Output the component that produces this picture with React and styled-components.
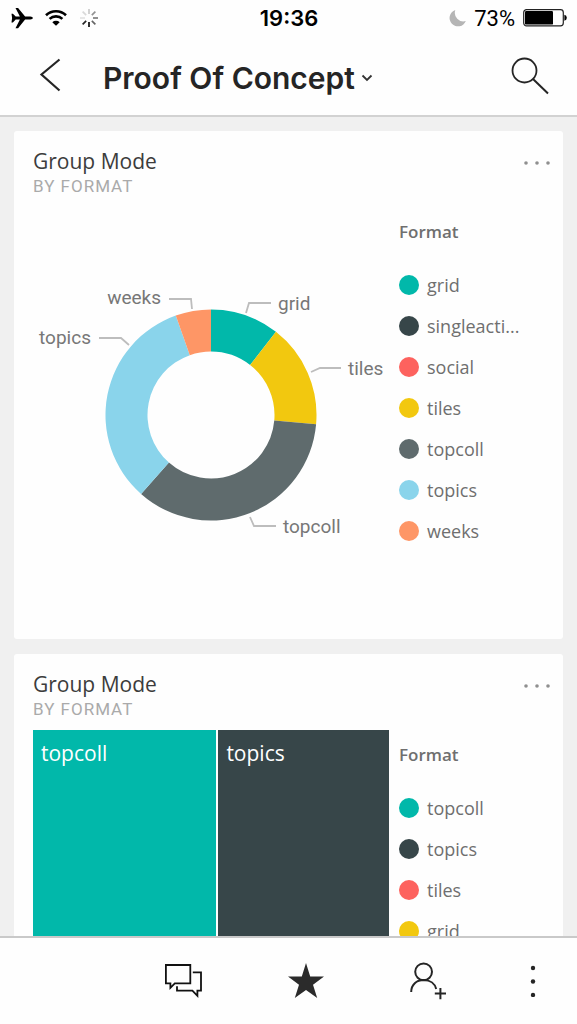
import React from 'react';
import styled, { createGlobalStyle } from 'styled-components';

const GlobalStyle = createGlobalStyle`
  * {
    box-sizing: border-box;
  }

  body {
    margin: 0;
    background: #f0f0f0;
    font-family: "Open Sans", "Noto Sans", sans-serif;
  }

  button {
    border: 0;
    padding: 0;
    background: none;
    color: inherit;
    font: inherit;
    cursor: pointer;
  }

  svg {
    display: block;
  }
`;

const formats = [
  { name: 'grid', color: '#01b8aa' },
  { name: 'singleacti...', color: '#374649' },
  { name: 'social', color: '#fd625e' },
  { name: 'tiles', color: '#f2c80f' },
  { name: 'topcoll', color: '#5f6b6d' },
  { name: 'topics', color: '#8ad4eb' },
  { name: 'weeks', color: '#fe9666' },
];

const treeFormats = [
  { name: 'topcoll', color: '#01b8aa' },
  { name: 'topics', color: '#374649' },
  { name: 'tiles', color: '#fd625e' },
  { name: 'grid', color: '#f2c80f' },
];

// angles in degrees, clockwise from the top
const slices = [
  { name: 'grid', from: 0, to: 38, color: '#01b8aa', line: '213,106 216,96 238,96', x: 245, y: 103 },
  { name: 'tiles', from: 38, to: 95, color: '#f2c80f', line: '278,165 287,161 308,161', x: 315, y: 168 },
  { name: 'topcoll', from: 95, to: 221.5, color: '#5f6b6d', line: '217,310 221,319 243,319', x: 250, y: 326 },
  { name: 'topics', from: 221.5, to: 340.5, color: '#8ad4eb', line: '96,138 88,131 66,131', x: 58, y: 137, end: true },
  { name: 'weeks', from: 340.5, to: 360, color: '#fe9666', line: '159,102 158,92 136,92', x: 128, y: 97, end: true },
];

const CX = 178;
const CY = 208;

const point = (deg, r) => {
  const a = (deg * Math.PI) / 180;
  return `${(CX + r * Math.sin(a)).toFixed(2)} ${(CY - r * Math.cos(a)).toFixed(2)}`;
};

const ring = (from, to, outer = 105.5, inner = 63.5) => {
  const large = to - from > 180 ? 1 : 0;
  return `M${point(from, outer)} A${outer} ${outer} 0 ${large} 1 ${point(to, outer)} L${point(to, inner)} A${inner} ${inner} 0 ${large} 0 ${point(from, inner)} Z`;
};

const Legend = ({ items }) => (
  <LegendBox>
    <LegendTitle>Format</LegendTitle>
    <LegendList>
      {items.map((item) => (
        <LegendItem key={item.name}>
          <Dot $color={item.color} />
          {item.name}
        </LegendItem>
      ))}
    </LegendList>
  </LegendBox>
);

const Tile = ({ children }) => (
  <Card>
    <CardHeader>
      <div>
        <CardTitle>Group Mode</CardTitle>
        <CardSubtitle>BY FORMAT</CardSubtitle>
      </div>
      <MoreButton aria-label="Tile options">
        <svg width="28" height="6" viewBox="0 0 28 6" fill="#8f8f8f">
          <circle cx="3" cy="3" r="1.8" />
          <circle cx="14" cy="3" r="1.8" />
          <circle cx="25" cy="3" r="1.8" />
        </svg>
      </MoreButton>
    </CardHeader>
    <CardBody>{children}</CardBody>
  </Card>
);

const Donut = () => (
  <Chart viewBox="0 0 356 432" role="img" aria-label="Group Mode by format">
    {slices.map((s) => (
      <g key={s.name}>
        <path d={ring(s.from, s.to)} fill={s.color} />
        <polyline points={s.line} fill="none" stroke="#bdbdbd" strokeWidth="1.8" />
        <ChartLabel x={s.x} y={s.y} textAnchor={s.end ? 'end' : 'start'}>{s.name}</ChartLabel>
      </g>
    ))}
  </Chart>
);

const App = () => {
  return (
    <Screen>
      <GlobalStyle />
      <Header>
        <StatusBar>
          <StatusGroup>
            <svg width="22" height="22" viewBox="11.5 7 22 22">
              <path d="M12 13.8h1.4l2.8 2.8h4.2L16 8h2.6l7 8.6h5.2q2.6.3 2.6 1.5t-2.6 1.5h-5.2l-7 8.6H16l4.4-8.6h-4.2l-2.8 2.8H12l.6-4.3z" />
            </svg>
            <svg width="22" height="18" viewBox="0 0 22 18" fill="none" stroke="#000" strokeWidth="2.6">
              <path d="M1 6.2a14.5 14.5 0 0 1 20 0" />
              <path d="M4.6 9.9a9.3 9.3 0 0 1 12.8 0" />
              <path d="M7.3 13.2a5.4 5.4 0 0 1 7.4 0L11 16.8z" fill="#000" stroke="none" />
            </svg>
            <svg width="20" height="20" viewBox="-10 -10 20 20" stroke="#000" strokeWidth="1.7">
              {[0.2, 0.42, 0.5, 0.6, 0.95, 0.85, 0.1, 0.14].map((opacity, i) => (
                <line key={i} y1="-4" y2="-9" opacity={opacity} transform={`rotate(${i * 45})`} />
              ))}
            </svg>
          </StatusGroup>
          <Time>19:36</Time>
          <StatusGroup $end>
            <svg width="17" height="18" viewBox="0 0 17 18" fill="#b5b5b5">
              <path d="M6.3 1A8.4 8.4 0 1 0 16.8 12 8.6 8.6 0 0 1 6.3 1z" />
            </svg>
            <Percent>73%</Percent>
            <svg width="44" height="18" viewBox="0 0 44 18">
              <rect x=".7" y=".7" width="39.6" height="16.2" rx="2.8" fill="none" stroke="#222" strokeWidth="1.2" />
              <rect x="2" y="2" width="28" height="13.6" rx="1.2" />
              <path d="M41.4 5.8q2.4.6 2.4 3t-2.4 3z" />
            </svg>
          </StatusGroup>
        </StatusBar>
        <NavBar>
          <NavButton aria-label="Back">
            <svg width="22" height="36" viewBox="0 0 22 36" fill="none" stroke="#252525" strokeWidth="2.2">
              <path d="M20.5 1.5 2.5 16.5 20.5 32.5" />
            </svg>
          </NavButton>
          <Heading>
            <TitleButton>
              Proof Of Concept
              <svg width="12" height="8" viewBox="0 0 12 8" fill="none" stroke="#333" strokeWidth="1.8">
                <path d="M1.5 1.5 6 6l4.5-4.5" />
              </svg>
            </TitleButton>
          </Heading>
          <NavButton aria-label="Search">
            <svg width="38" height="38" viewBox="0 0 38 38" fill="none" stroke="#252525" strokeWidth="1.8">
              <circle cx="13.5" cy="13.5" r="12" />
              <path d="m22 22 15 14.5" strokeWidth="2" />
            </svg>
          </NavButton>
        </NavBar>
      </Header>

      <Content>
        <Tile>
          <Donut />
          <Legend items={formats} />
        </Tile>
        <Tile>
          <Treemap>
            <TreeNode $share={184} $color="#01b8aa">topcoll</TreeNode>
            <TreeNode $share={170} $color="#374649">topics</TreeNode>
          </Treemap>
          <Legend items={treeFormats} />
        </Tile>
      </Content>

      <TabBar>
        <TabButton $column={2} aria-label="Comments">
          <svg width="38" height="36" viewBox="0 0 38 36" fill="none" stroke="#111" strokeWidth="1.8">
            <path d="M1.9 2h24.4v18.4H10.8L6.4 24.8v-4.4H1.9z" />
            <path d="M28.8 9.4h8.2v18.2h-3.6v5.2l-5-5.2H13v-4.4" />
          </svg>
        </TabButton>
        <TabButton $column={3} aria-label="Favorite">
          <svg width="36" height="36" viewBox="0 0 36 36" fill="#2b2b2b">
            <path d="m18 0 4.2 13.4H36L25 21.8 29.2 35 18 27 6.8 35 11 21.8 0 13.4h13.8z" />
          </svg>
        </TabButton>
        <TabButton $column={4} aria-label="Invite">
          <svg width="38" height="38" viewBox="0 0 38 38" fill="none" stroke="#252525" strokeWidth="2">
            <circle cx="14.6" cy="9.8" r="8.4" />
            <path d="M2.2 30c0-7.6 5.4-12 12.4-12 6.6 0 11.4 3.6 12.6 9" />
            <path d="M31.4 26v11.2M25.8 31.6H37" />
          </svg>
        </TabButton>
        <TabButton $column={5} aria-label="More">
          <svg width="6" height="32" viewBox="0 0 6 32" fill="#252525">
            <circle cx="3" cy="3" r="2.2" />
            <circle cx="3" cy="16.5" r="2.2" />
            <circle cx="3" cy="30" r="2.2" />
          </svg>
        </TabButton>
      </TabBar>
    </Screen>
  );
};

const Screen = styled.div`
  display: flex;
  flex-direction: column;
  height: 100vh;
  overflow: hidden;
`;

const Header = styled.header`
  flex: none;
  background: #fefefe;
  border-bottom: 2px solid #d2d2d2;
  font-family: Inter, "Liberation Sans", sans-serif;
`;

const StatusBar = styled.div`
  display: grid;
  grid-template-columns: 1fr auto 1fr;
  align-items: center;
  height: 36px;
  padding: 0 10px 0 11px;
  color: #000;
`;

const StatusGroup = styled.div`
  display: flex;
  align-items: center;
  gap: ${(p) => (p.$end ? '8px' : '12px')};
  justify-content: ${(p) => (p.$end ? 'flex-end' : 'flex-start')};
`;

const Time = styled.time`
  font-size: 22px;
  font-weight: 600;
`;

const Percent = styled.span`
  font-family: Roboto, sans-serif;
  font-size: 22px;
`;

const NavBar = styled.nav`
  display: flex;
  align-items: center;
  height: 79px;
  padding: 0 27px 0 30px;
`;

const NavButton = styled.button`
  display: flex;
  align-items: center;
  justify-content: center;
  width: 40px;
  height: 48px;
`;

const Heading = styled.h1`
  flex: 1;
  margin: 0;
  padding: 4px 0 0 33px;
  font-size: 30px;
  font-weight: 600;
  line-height: 40px;
  color: #252525;
`;

const TitleButton = styled.button`
  display: flex;
  align-items: center;
  gap: 6px;
  white-space: nowrap;
`;

const Content = styled.main`
  flex: 1;
  min-height: 0;
  display: flex;
  flex-direction: column;
  gap: 15px;
  padding: 14px;
  overflow-y: auto;
  scrollbar-width: none;
`;

const Card = styled.section`
  flex: none;
  background: #fefefe;
  border-radius: 3px;
`;

const CardHeader = styled.div`
  display: flex;
  justify-content: space-between;
  align-items: flex-start;
  height: 76px;
  padding: 16px 12px 0 19px;
`;

const CardTitle = styled.h2`
  margin: 0;
  font-size: 21px;
  font-weight: 400;
  line-height: 28px;
  color: #3c3c3c;
`;

const CardSubtitle = styled.p`
  margin: 0;
  font-family: Roboto, sans-serif;
  font-size: 17px;
  line-height: 22px;
  letter-spacing: 1px;
  color: #aaa;
`;

const MoreButton = styled.button`
  display: flex;
  align-items: center;
  height: 32px;
`;

const CardBody = styled.div`
  display: grid;
  grid-template-columns: minmax(0, 1fr) 147px;
  gap: 10px;
  padding: 0 17px 0 19px;
`;

const Chart = styled.svg`
  width: 100%;
`;

const ChartLabel = styled.text`
  font-family: Roboto, sans-serif;
  font-size: 19px;
  fill: #777;
`;

const LegendBox = styled.div`
  padding-top: 13px;
  color: #6f6f6f;
`;

const LegendTitle = styled.h3`
  margin: 0 0 20px;
  font-size: 17px;
  font-weight: 600;
  line-height: 24px;
`;

const LegendList = styled.ul`
  margin: 0;
  padding: 0;
  list-style: none;
`;

const LegendItem = styled.li`
  display: flex;
  align-items: center;
  gap: 8px;
  height: 41px;
  font-size: 18px;
`;

const Dot = styled.span`
  flex: none;
  width: 20px;
  height: 20px;
  border-radius: 50%;
  background: ${(p) => p.$color};
`;

const Treemap = styled.div`
  display: flex;
  gap: 2px;
  min-height: 432px;
`;

const TreeNode = styled.div`
  flex: ${(p) => p.$share} 1 0;
  padding: 8px;
  background: ${(p) => p.$color};
  color: #fff;
  font-size: 21px;
  line-height: 30px;
`;

const TabBar = styled.nav`
  flex: none;
  display: grid;
  grid-template-columns: repeat(4, 1fr) 88px;
  align-items: center;
  height: 88px;
  background: #fefefe;
  border-top: 2px solid #c9c9c9;
`;

const TabButton = styled.button`
  grid-column: ${(p) => p.$column};
  display: flex;
  align-items: center;
  justify-content: center;
  height: 64px;
`;

export default App;
